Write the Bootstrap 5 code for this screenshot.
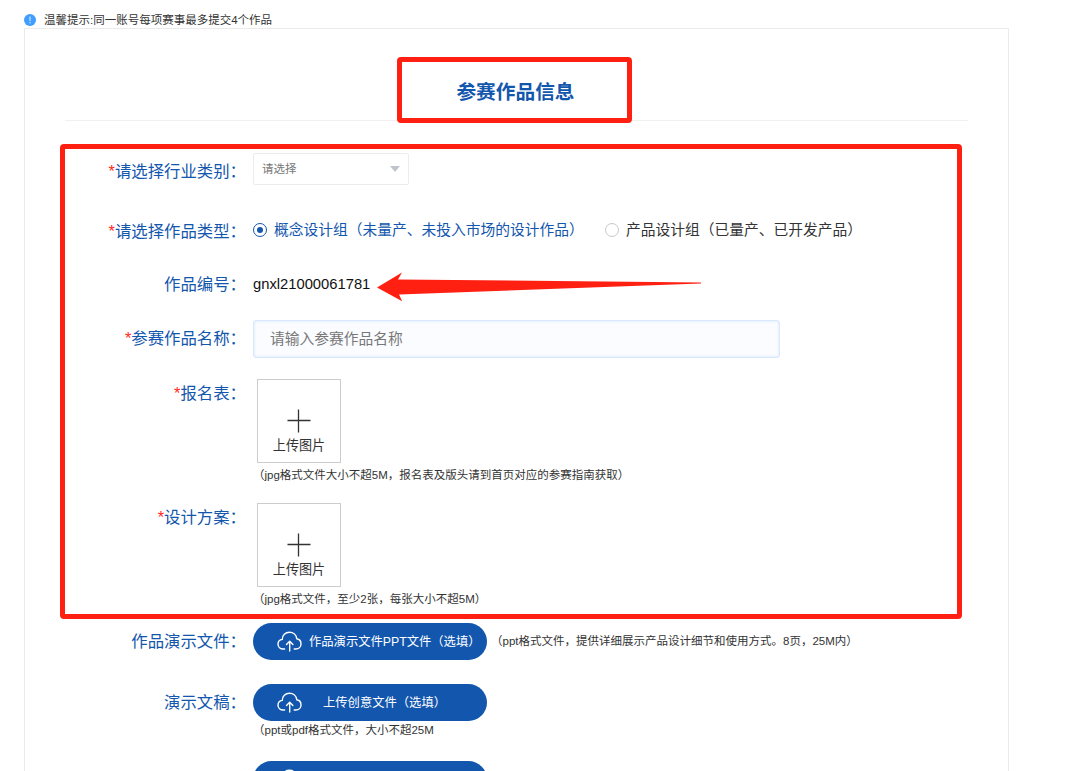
<!DOCTYPE html>
<html lang="zh-CN">
<head>
<meta charset="utf-8">
<meta name="viewport" content="width=device-width, initial-scale=1">
<title>参赛作品信息</title>
<link href="https://cdn.jsdelivr.net/npm/bootstrap@5.3.0/dist/css/bootstrap.min.css" rel="stylesheet">
<style>
  :root { --brand: #1256ad; --alert: #ff2012; }
  body { font-family: "Liberation Sans", "Noto Sans CJK SC", sans-serif; color: #333; font-size: 11.5px; background: #fff; height: 771px; overflow: hidden; }
  .tip { height: 28px; padding: 12px 0 0 24px; line-height: 16px; gap: 8px; color: #333; }
  .panel { width: 985px; height: 760px; margin-left: 24px; border: 1px solid #ebebeb; }
  .title-bar { height: 92px; margin: 0 40px; border-bottom: 1px solid #f0f0f0; padding-top: 33px; }
  .title-bar h1 { font-size: 19.7px; line-height: 60px; font-weight: 700; color: var(--brand); height: 58px; padding-right: 2px; }
  .entry-form { padding-top: 32px; }
  .entry-label { width: 221px; margin-right: 7px; text-align: right; font-size: 16.4px; line-height: 36px; color: var(--brand); white-space: nowrap; }
  .entry-label i { color: #ff2a20; font-style: normal; }
  .h-select { height: 60px; } .h-radio { height: 53px; } .h-code { height: 54px; }
  .h-name { height: 55px; } .h-upload { height: 124px; } .h-demo { height: 61px; } .h-draft { height: 77px; }
  .category { width: 156px; height: 32px; border: 1px solid #ececec; border-radius: 2px; padding: 1px 8px 0; color: #777; font-size: 11.5px; }
  .caret { border: 5px solid transparent; border-top: 6px solid #c0c4cc; border-bottom: 0; margin-bottom: 1px; }
  .kind { font-size: 14.76px; line-height: 34px; height: 34px; gap: 7px; color: #333; white-space: nowrap; }
  .kind.picked { color: var(--brand); width: 352px; }
  .dot { width: 14px; height: 14px; border: 1px solid #c8c8c8; border-radius: 50%; }
  .picked .dot { border-color: var(--brand); }
  .picked .dot::after { content: ""; width: 6px; height: 6px; border-radius: 50%; background: var(--brand); }
  .code { font-size: 14.76px; line-height: 36px; color: #111; }
  .work-name.form-control { width: 527px; height: 38px; border: 1px solid #d9e8fd; border-radius: 3px; background: #fafcff; box-shadow: inset 0 0 3px #d3e4fc; padding: 0 16px; font-size: 14.76px; color: #666; }
  .work-name::placeholder { color: #777; opacity: 1; }
  .uploader { width: 84px; height: 84px; border: 1px solid #ccc; margin: 4px 0 0 4px; padding-top: 29px; font-size: 13.1px; line-height: 18px; color: #333; }
  .uploader svg { display: block; margin-bottom: 4px; }
  .hint { line-height: 18px; color: #333; white-space: nowrap; }
  .under-box { padding-top: 3px; }
  .beside { margin-left: 4px; line-height: 37px; }
  .file-btn.btn { width: 234px; height: 37px; border-radius: 19px; background: var(--brand); color: #fff; border: 0; padding: 0 0 0 24px; font-size: 12.3px; line-height: 20px; white-space: nowrap; text-align: left; }
  .file-btn svg + span { padding-top: 1px; margin-left: 7px; }
  .file-btn svg + .inset { margin-left: 21px; }
  .mark-box { position: absolute; border: 5px solid var(--alert); border-radius: 4px; pointer-events: none; }
  .mark-title { left: 397px; top: 57px; width: 235px; height: 66px; }
  .mark-form { left: 59.5px; top: 144px; width: 902px; height: 475px; }
  .arrow { position: absolute; left: 376px; top: 271px; }
</style>
</head>
<body class="position-relative">
<svg class="d-none" xmlns="http://www.w3.org/2000/svg">
  <symbol id="cloud" viewBox="0 0 25 22">
    <g fill="none" stroke="#fff" stroke-width="1.4" stroke-linecap="round" stroke-linejoin="round">
      <path d="M7.600 18H6.300C3.300 18 1 15.900 1 13.200c0-2.600 1.800-4.500 4.300-4.800C5.200 4.300 8.400 1.300 12.400 1.300c3.900 0 6.900 2.700 7.400 6.500 2.500.4 4.200 2.500 4.200 5.100 0 2.900-2.200 5.100-5.200 5.100h-1.600"/>
      <path d="M12.700 20V11M9.500 13.500l3.200-3.200 3.200 3.200"/>
    </g>
  </symbol>
  <symbol id="plus" viewBox="0 0 24 24"><path d="M11.500 .5v23M.5 11.500h23" stroke="#333" stroke-width="1.300" fill="none"/></symbol>
</svg>

<div class="tip d-flex align-items-center">
  <svg width="12" height="12" viewBox="0 0 12 12"><circle cx="6" cy="6" r="6" fill="#409eff"/><path d="M6 2.500v4.500M6 8v1.300" stroke="#fff" stroke-opacity=".8" stroke-width="1.100"/></svg>
  <span>温馨提示:同一账号每项赛事最多提交4个作品</span>
</div>

<main class="panel">
  <header class="title-bar"><h1 class="text-center m-0">参赛作品信息</h1></header>
  <form class="entry-form">
    <div class="d-flex h-select">
      <div class="entry-label"><i>*</i>请选择行业类别：</div>
      <div class="category d-flex align-items-center justify-content-between"><span>请选择</span><span class="caret"></span></div>
    </div>
    <div class="d-flex h-radio">
      <div class="entry-label"><i>*</i>请选择作品类型：</div>
      <label class="kind picked d-flex align-items-center"><span class="dot d-flex align-items-center justify-content-center"></span>概念设计组（未量产、未投入市场的设计作品）</label>
      <label class="kind d-flex align-items-center"><span class="dot"></span>产品设计组（已量产、已开发产品）</label>
    </div>
    <div class="d-flex h-code">
      <div class="entry-label">作品编号：</div>
      <div class="code">gnxl21000061781</div>
    </div>
    <div class="d-flex h-name">
      <div class="entry-label"><i>*</i>参赛作品名称：</div>
      <input class="work-name form-control" type="text" placeholder="请输入参赛作品名称">
    </div>
    <div class="d-flex h-upload">
      <div class="entry-label"><i>*</i>报名表：</div>
      <div>
        <div class="uploader d-flex flex-column align-items-center"><svg width="24" height="24"><use href="#plus"/></svg>上传图片</div>
        <div class="hint under-box">（jpg格式文件大小不超5M，报名表及版头请到首页对应的参赛指南获取）</div>
      </div>
    </div>
    <div class="d-flex h-upload">
      <div class="entry-label"><i>*</i>设计方案：</div>
      <div>
        <div class="uploader d-flex flex-column align-items-center"><svg width="24" height="24"><use href="#plus"/></svg>上传图片</div>
        <div class="hint under-box">（jpg格式文件，至少2张，每张大小不超5M）</div>
      </div>
    </div>
    <div class="d-flex h-demo">
      <div class="entry-label">作品演示文件：</div>
      <button type="button" class="btn file-btn d-flex align-items-center"><svg width="25" height="22"><use href="#cloud"/></svg><span>作品演示文件PPT文件（选填）</span></button>
      <div class="hint beside">（ppt格式文件，提供详细展示产品设计细节和使用方式。8页，25M内）</div>
    </div>
    <div class="d-flex h-draft">
      <div class="entry-label">演示文稿：</div>
      <div>
        <button type="button" class="btn file-btn d-flex align-items-center"><svg width="25" height="22"><use href="#cloud"/></svg><span class="inset">上传创意文件（选填）</span></button>
        <div class="hint">（ppt或pdf格式文件，大小不超25M</div>
      </div>
    </div>
    <div class="d-flex">
      <div class="entry-label"></div>
      <button type="button" class="btn file-btn d-flex align-items-center" aria-label="上传"><svg width="25" height="22"><use href="#cloud"/></svg></button>
    </div>
  </form>
</main>

<div class="mark-box mark-title"></div>
<div class="mark-box mark-form"></div>
<svg class="arrow" width="326" height="32" viewBox="0 0 326 32"><path d="M1 16.500 26 1.500 22 8.500 325 11.500V12.500L23 23.500l3.200 6.700z" fill="#ff2012"/></svg>
<script src="https://cdn.jsdelivr.net/npm/bootstrap@5.3.0/dist/js/bootstrap.bundle.min.js"></script>
</body>
</html>
